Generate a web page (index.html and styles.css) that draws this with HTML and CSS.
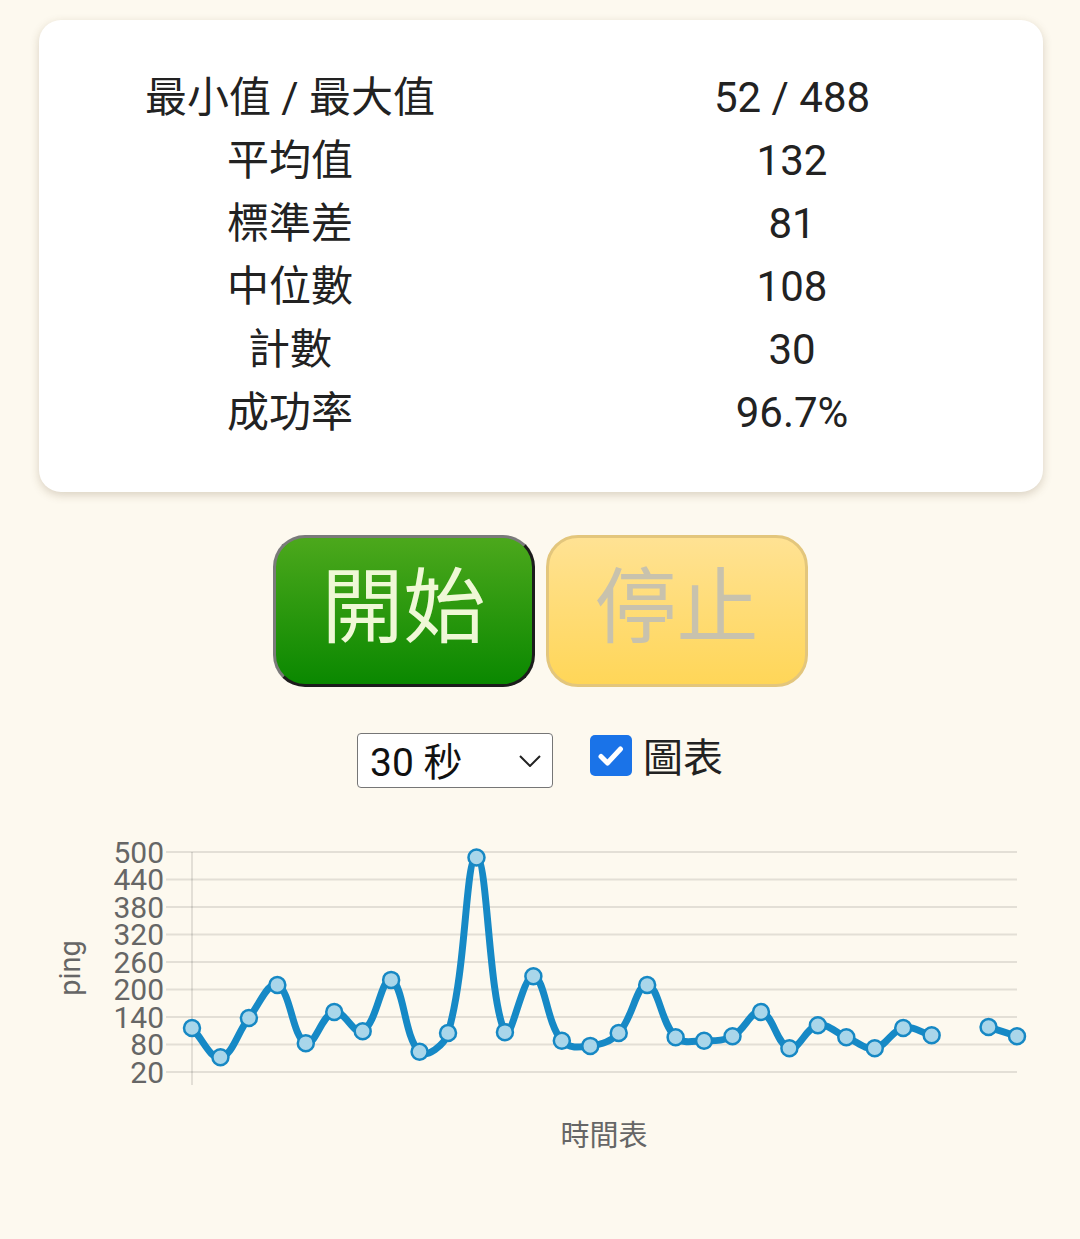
FILE: index.html
```html
<!DOCTYPE html>
<html>
	<head>
		<meta charset="UTF-8">
		<title>Ping</title>
		<link rel="stylesheet" href="styles.css">
	</head>
	<body>
		<div class="card">
			<table class="stats">
				<tr><td>最小值 / 最大值</td><td>52 / 488</td></tr>
				<tr><td>平均值</td><td>132</td></tr>
				<tr><td>標準差</td><td>81</td></tr>
				<tr><td>中位數</td><td>108</td></tr>
				<tr><td>計數</td><td>30</td></tr>
				<tr><td>成功率</td><td>96.7%</td></tr>
			</table>
		</div>
		<div class="buttons">
			<button class="btn start">開始</button>
			<button class="btn stop" disabled>停止</button>
		</div>
		<div class="controls">
			<div class="select">
				<span>30 秒</span>
				<svg width="22" height="12" viewBox="0 0 22 12"><path d="M1 1l10 10 10-10" fill="none" stroke="#222" stroke-width="2"/></svg>
			</div>
			<label class="check">
				<span class="box"><svg width="30" height="30" viewBox="0 0 30 30"><path d="M5 15.5l6.5 6.5 13-14" fill="none" stroke="#fff" stroke-width="5" stroke-linecap="round" stroke-linejoin="round"/></svg></span>
				<span>圖表</span>
			</label>
		</div>
		<div class="chart">
			<svg id="chart" width="1080" height="340" viewBox="0 830 1080 340"></svg>
		</div>
		<script src="chart.js"></script>
	</body>
</html>
```

FILE: styles.css
```css
*{
	margin: 0;
	padding: 0;
	box-sizing: border-box;
}
body{
	background: #fdf9ef;
	font-family: Roboto, "Noto Sans CJK TC", sans-serif;
	color: #222;
}
.card{
	margin: 20px 37px 0 39px;
	background: #fff;
	border-radius: 22px;
	padding: 46px 0 48px;
	box-shadow: 0 3px 10px rgba(90,70,30,.22);
}
.stats{
	width: 100%;
	border-collapse: collapse;
	font-size: 42px;
}
.stats td{
	width: 50%;
	height: 63px;
	line-height: 63px;
	text-align: center;
}
.buttons{
	display: flex;
	justify-content: center;
	gap: 11px;
	margin-top: 43px;
}
.btn{
	width: 262px;
	height: 152px;
	border-radius: 32px;
	border: 3px solid;
	padding-bottom: 20px;
	font-family: "Noto Sans CJK TC", sans-serif;
	font-size: 82px;
	line-height: 1;
}
.start{
	background: linear-gradient(#4ca81c, #0a8800);
	color: #eff8d6;
	border-color: #7a7a7a #1c1c1c #1c1c1c #7a7a7a;
}
.stop{
	background: linear-gradient(#ffe293, #ffd658);
	color: #c8c2ad;
	border-color: #e3c67c;
}
.controls{
	display: flex;
	justify-content: center;
	align-items: center;
	height: 55px;
	margin-top: 46px;
}
.select{
	width: 196px;
	height: 55px;
	border: 1px solid #767676;
	border-radius: 4px;
	background: #fff;
	display: flex;
	align-items: center;
	justify-content: space-between;
	padding: 0 11px 4px 12px;
	font-size: 39px;
	color: #111;
}
.select svg{
	margin-top: 4px;
}
.check{
	margin: 0 0 4px 37px;
	display: flex;
	align-items: center;
	gap: 11px;
	font-size: 40px;
	line-height: 1.2;
	color: #222;
}
.box{
	width: 42px;
	height: 41px;
	margin-bottom: 6px;
	background: #1a73e8;
	border-radius: 5px;
	display: flex;
	align-items: center;
	justify-content: center;
}
.chart{
	margin-top: 42px;
}
.chart svg{
	display: block;
}
.chart .tick{
	font-family: Roboto, sans-serif;
	font-size: 30px;
	fill: #666;
}
.chart .axis{
	font-family: Roboto, "Noto Sans CJK TC", sans-serif;
	font-size: 29px;
	fill: #666;
}
```

FILE: chart.js
```js
// ping 數據，null 為失敗
var data = [116,52,138,210,83,151,109,221,64,105,488,107,229,88,77,105,210,96,88,98,151,72,122,96,72,116,100,null,118,98];

var area = { left: 192, right: 1017, top: 852, bottom: 1072 };
var min = 20, max = 500;

function px(i) { return area.left + i * (area.right - area.left) / (data.length - 1); }
function py(v) { return area.top + (max - v) * (area.bottom - area.top) / (max - min); }

var svg = document.getElementById("chart");
var html = "";

// 格線與刻度
for (var v = min; v <= max; v += 60) {
	var y = py(v);
	html += '<line x1="166" x2="' + area.right + '" y1="' + y + '" y2="' + y + '" stroke="rgba(0,0,0,.1)" stroke-width="2"/>';
	html += '<text x="164" y="' + y + '" text-anchor="end" dominant-baseline="central" class="tick">' + v + '</text>';
}
html += '<line x1="' + area.left + '" x2="' + area.left + '" y1="' + area.top + '" y2="1085" stroke="rgba(0,0,0,.1)" stroke-width="2"/>';

// 依 null 切成多段曲線
var segs = [], cur = [];
data.forEach(function (v, i) {
	if (v === null) {
		if (cur.length) segs.push(cur);
		cur = [];
	} else {
		cur.push({ x: px(i), y: py(v) });
	}
});
if (cur.length) segs.push(cur);

var t = 0.4;
segs.forEach(function (pts) {
	pts.forEach(function (p, i) {
		var a = pts[i - 1] || p, b = pts[i + 1] || p;
		var d01 = Math.hypot(p.x - a.x, p.y - a.y);
		var d12 = Math.hypot(b.x - p.x, b.y - p.y);
		var s01 = d01 / (d01 + d12 || 1), s12 = d12 / (d01 + d12 || 1);
		p.cpx1 = p.x - t * s01 * (b.x - a.x);
		p.cpy1 = p.y - t * s01 * (b.y - a.y);
		p.cpx2 = p.x + t * s12 * (b.x - a.x);
		p.cpy2 = p.y + t * s12 * (b.y - a.y);
	});
	var d = "M" + pts[0].x + " " + pts[0].y;
	for (var i = 1; i < pts.length; i++) {
		var p = pts[i - 1], q = pts[i];
		d += " C" + p.cpx2 + " " + p.cpy2 + " " + q.cpx1 + " " + q.cpy1 + " " + q.x + " " + q.y;
	}
	html += '<path d="' + d + '" fill="none" stroke="#1689c6" stroke-width="7" stroke-linejoin="round"/>';
});

// 資料點
data.forEach(function (v, i) {
	if (v === null) return;
	html += '<circle cx="' + px(i) + '" cy="' + py(v) + '" r="8" fill="#a9d6ea" stroke="#1688c4" stroke-width="2.5"/>';
});

html += '<text x="70" y="968" text-anchor="middle" dominant-baseline="central" transform="rotate(-90 70 968)" class="axis">ping</text>';
html += '<text x="604" y="1136" text-anchor="middle" dominant-baseline="central" class="axis">時間表</text>';

svg.innerHTML = html;
```
